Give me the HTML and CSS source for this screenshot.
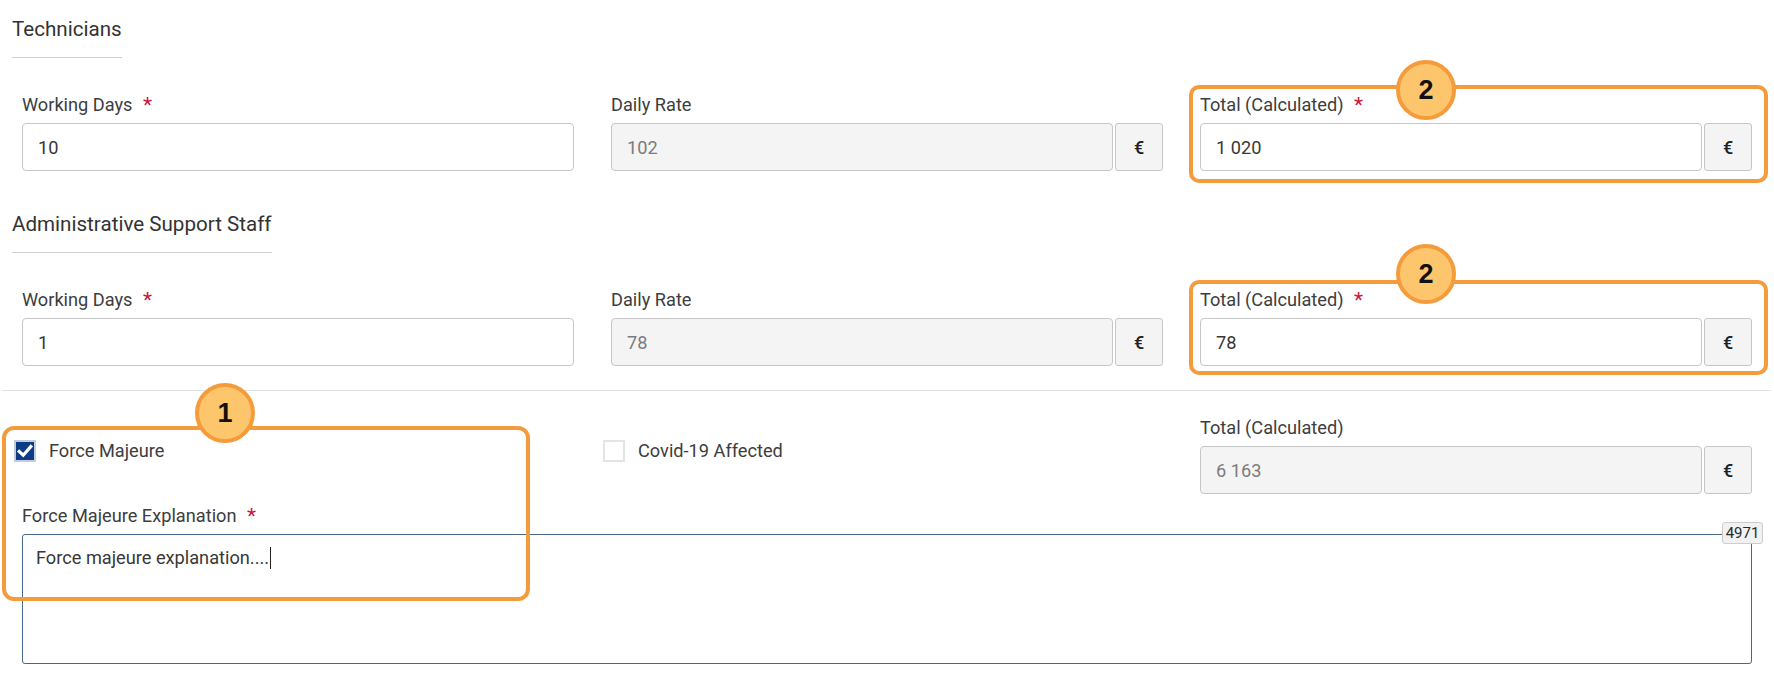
FILE: index.html
```html
<!DOCTYPE html>
<html lang="en">
<head>
<meta charset="utf-8">
<title>Costs</title>
<link rel="stylesheet" href="styles.css">
</head>
<body>
<div class="page">
  <section class="group">
    <h2 class="heading">Technicians</h2>
    <div class="fields">
      <div class="field">
        <label class="label">Working Days <span class="req">*</span></label>
        <div class="control"><input class="input" type="text" value="10" readonly></div>
      </div>
      <div class="field">
        <label class="label">Daily Rate</label>
        <div class="control"><input class="input disabled" type="text" value="102" readonly><span class="addon">€</span></div>
      </div>
      <div class="field hl hl-a">
        <label class="label">Total (Calculated) <span class="req">*</span></label>
        <div class="control"><input class="input" type="text" value="1 020" readonly><span class="addon">€</span></div>
        <span class="hl-box"></span>
        <span class="badge">2</span>
      </div>
    </div>
  </section>

  <section class="group">
    <h2 class="heading">Administrative Support Staff</h2>
    <div class="fields">
      <div class="field">
        <label class="label">Working Days <span class="req">*</span></label>
        <div class="control"><input class="input" type="text" value="1" readonly></div>
      </div>
      <div class="field">
        <label class="label">Daily Rate</label>
        <div class="control"><input class="input disabled" type="text" value="78" readonly><span class="addon">€</span></div>
      </div>
      <div class="field hl hl-b">
        <label class="label">Total (Calculated) <span class="req">*</span></label>
        <div class="control"><input class="input" type="text" value="78" readonly><span class="addon">€</span></div>
        <span class="hl-box"></span>
        <span class="badge">2</span>
      </div>
    </div>
  </section>

  <div class="divider"></div>

  <section class="lower">
    <div class="fields">
      <div class="field">
        <div class="check">
          <span class="box checked">
            <svg viewBox="0 0 18 18" width="18" height="18"><path d="M3.2 9.4 L7.2 13.2 L14.8 4.6" fill="none" stroke="#fff" stroke-width="3.2" stroke-linecap="square"/></svg>
          </span>
          <span>Force Majeure</span>
        </div>
      </div>
      <div class="field">
        <div class="check">
          <span class="box"></span>
          <span>Covid-19 Affected</span>
        </div>
      </div>
      <div class="field">
        <label class="label">Total (Calculated)</label>
        <div class="control"><input class="input disabled" type="text" value="6 163" readonly><span class="addon">€</span></div>
      </div>
    </div>

    <div class="explain">
      <label class="label">Force Majeure Explanation <span class="req">*</span></label>
      <div class="textarea">Force majeure explanation....<span class="caret"></span></div>
      <span class="counter">4971</span>
    </div>

    <span class="hl-box hl-c"></span>
    <span class="badge badge-c">1</span>
  </section>
</div>
</body>
</html>
```
FILE: styles.css
```css
html, body {
  margin: 0;
  padding: 0;
  background: #fff;
}

body {
  font-family: Roboto, "Liberation Sans", Arial, sans-serif;
  color: #3a3a3a;
  width: 1774px;
  height: 677px;
  overflow: hidden;
}

.page {
  padding: 17px 0 0 12px;
  box-sizing: border-box;
  width: 1774px;
}

.group + .group {
  margin-top: 41px;
}

.heading {
  display: inline-block;
  margin: 0;
  font-size: 20.6px;
  font-weight: 400;
  line-height: 24px;
  padding-bottom: 16px;
  border-bottom: 1px solid #cfcfcf;
  color: #333;
}

.fields {
  display: grid;
  grid-template-columns: repeat(3, 1fr);
  column-gap: 37px;
  margin: 35px 0 0 10px;
  width: 1730px;
}

.field {
  min-width: 0;
}

.label {
  display: block;
  font-size: 18.2px;
  line-height: 24px;
  margin-bottom: 6px;
  color: #3d3d3d;
}

.req {
  color: #c8173a;
  font-size: 21px;
  margin-left: 6px;
  line-height: 10px;
  vertical-align: -1px;
}

.control {
  display: flex;
  gap: 2px;
  height: 48px;
}

.input {
  flex: 1;
  min-width: 0;
  height: 48px;
  box-sizing: border-box;
  border: 1px solid #c6c6c6;
  border-radius: 4px;
  padding: 0 15px;
  font-family: Roboto, "Liberation Sans", Arial, sans-serif;
  font-size: 18.2px;
  color: #383838;
  background: #fff;
  outline: none;
}

.input.disabled {
  background: #f4f4f4;
  color: #7c7c7c;
}

.addon {
  flex: none;
  width: 48px;
  box-sizing: border-box;
  border: 1px solid #c6c6c6;
  border-radius: 3px;
  background: #f4f4f4;
  display: flex;
  align-items: center;
  justify-content: center;
  font-size: 18px;
  font-weight: 500;
  color: #222;
}

.divider {
  height: 1px;
  background: #e3e3e3;
  margin: 24px 3px 0 -10px;
}

.lower {
  position: relative;
  margin-top: 25px;
}

.lower .fields {
  margin-top: 0;
}

.check {
  display: flex;
  align-items: center;
  gap: 13px;
  margin: 23px 0 0 -8px;
  font-size: 18.2px;
  line-height: 24px;
  color: #3d3d3d;
}

.box {
  flex: none;
  width: 22px;
  height: 22px;
  box-sizing: border-box;
  border: 2px solid #e4e4e4;
  display: flex;
  align-items: center;
  justify-content: center;
}

.box.checked {
  background: #0d3c87;
  border-color: #c3ccd8;
}

.explain {
  position: relative;
  margin: 10px 0 0 10px;
  width: 1730px;
}

.textarea {
  height: 130px;
  box-sizing: border-box;
  border: 1px solid #46688a;
  border-radius: 3px;
  padding: 11px 13px;
  font-size: 18.2px;
  line-height: 24px;
  color: #383838;
}

.caret {
  display: inline-block;
  width: 1px;
  height: 22px;
  background: #222;
  vertical-align: -5px;
  margin-left: 1px;
}

.counter {
  position: absolute;
  top: 18px;
  right: -11px;
  width: 41px;
  height: 22px;
  box-sizing: border-box;
  border: 1px solid #cdcdcd;
  border-radius: 3px;
  background: #f1f1f1;
  font-size: 15px;
  line-height: 20px;
  text-align: center;
  color: #2a2a2a;
}

/* annotation overlays */
.hl {
  position: relative;
}

.hl-box {
  position: absolute;
  border: 4px solid #f49b3b;
  border-radius: 10px;
  pointer-events: none;
}

.hl-a .hl-box {
  top: -8px;
  left: -11px;
  right: -16px;
  bottom: -12px;
}

.hl-b .hl-box {
  top: -8px;
  left: -11px;
  right: -16px;
  bottom: -9px;
}

.badge {
  position: absolute;
  width: 60px;
  height: 60px;
  box-sizing: border-box;
  border-radius: 50%;
  background: #fdc66c;
  border: 4px solid #f49b3b;
  display: flex;
  align-items: center;
  justify-content: center;
  font-family: "Liberation Sans", Arial, sans-serif;
  font-weight: 700;
  font-size: 27px;
  color: #111;
}

.hl-a .badge {
  left: 196px;
  top: -33px;
}

.hl-b .badge {
  left: 196px;
  top: -44px;
}

.hl-c {
  left: -10px;
  top: 10px;
  width: 528px;
  height: 175px;
  box-sizing: border-box;
  border-radius: 12px;
}

.badge-c {
  left: 183px;
  top: -33px;
}
```
